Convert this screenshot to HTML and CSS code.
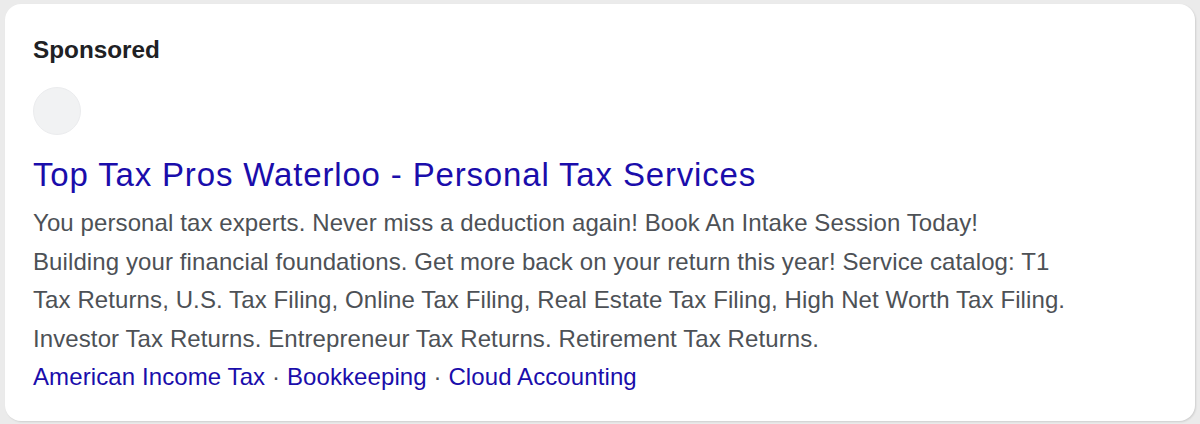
FILE: index.html
```html
<!DOCTYPE html>
<html>
<head>
<meta charset="utf-8">
<link rel="stylesheet" href="styles.css">
</head>
<body>
<div class="card">
  <div class="sponsored">Sponsored</div>
  <div class="advertiser">
    <div class="favicon"></div>
  </div>
  <a class="title" href="#">Top Tax Pros Waterloo - Personal Tax Services</a>
  <div class="desc">You personal tax experts. Never miss a deduction again! Book An Intake Session Today!<br>Building your financial foundations. Get more back on your return this year! Service catalog: T1<br>Tax Returns, U.S. Tax Filing, Online Tax Filing, Real Estate Tax Filing, High Net Worth Tax Filing.<br>Investor Tax Returns. Entrepreneur Tax Returns. Retirement Tax Returns.</div>
  <div class="links">
    <a href="#">American Income Tax</a><span class="dot"> · </span><a href="#">Bookkeeping</a><span class="dot"> · </span><a href="#">Cloud Accounting</a>
  </div>
</div>
</body>
</html>
```

FILE: styles.css
```css
html, body {
  margin: 0;
  padding: 0;
  background: #ebebeb;
  width: 1200px;
  height: 424px;
  overflow: hidden;
}
body {
  font-family: "Liberation Sans", Arial, sans-serif;
  padding: 4px 5px 0 5px;
  box-sizing: border-box;
}
.card {
  background: #fff;
  border-radius: 16px;
  height: 417px;
  box-sizing: border-box;
  padding: 32px 28px 0 28px;
  box-shadow: 1px 1px 2px rgba(0,0,0,0.12);
}
.sponsored {
  font-size: 24.3px;
  font-weight: bold;
  color: #202124;
  line-height: 28px;
}
.advertiser {
  display: flex;
  align-items: center;
  margin-top: 23px;
  height: 48px;
}
.favicon {
  width: 46px;
  height: 46px;
  border-radius: 50%;
  background: #f1f2f3;
  border: 1px solid #ebecee;
}
.title {
  display: block;
  margin-top: 20px;
  font-size: 33px;
  letter-spacing: 0.84px;
  line-height: 40px;
  color: #1a0dab;
  text-decoration: none;
}
.desc {
  margin-top: 9px;
  font-size: 24px;
  letter-spacing: 0.1px;
  line-height: 38.5px;
  color: #4d5156;
  white-space: nowrap;
}
.links {
  font-size: 24px;
  letter-spacing: 0.1px;
  line-height: 38.5px;
  color: #4d5156;
}
.links a {
  color: #1a0dab;
  text-decoration: none;
}
```
